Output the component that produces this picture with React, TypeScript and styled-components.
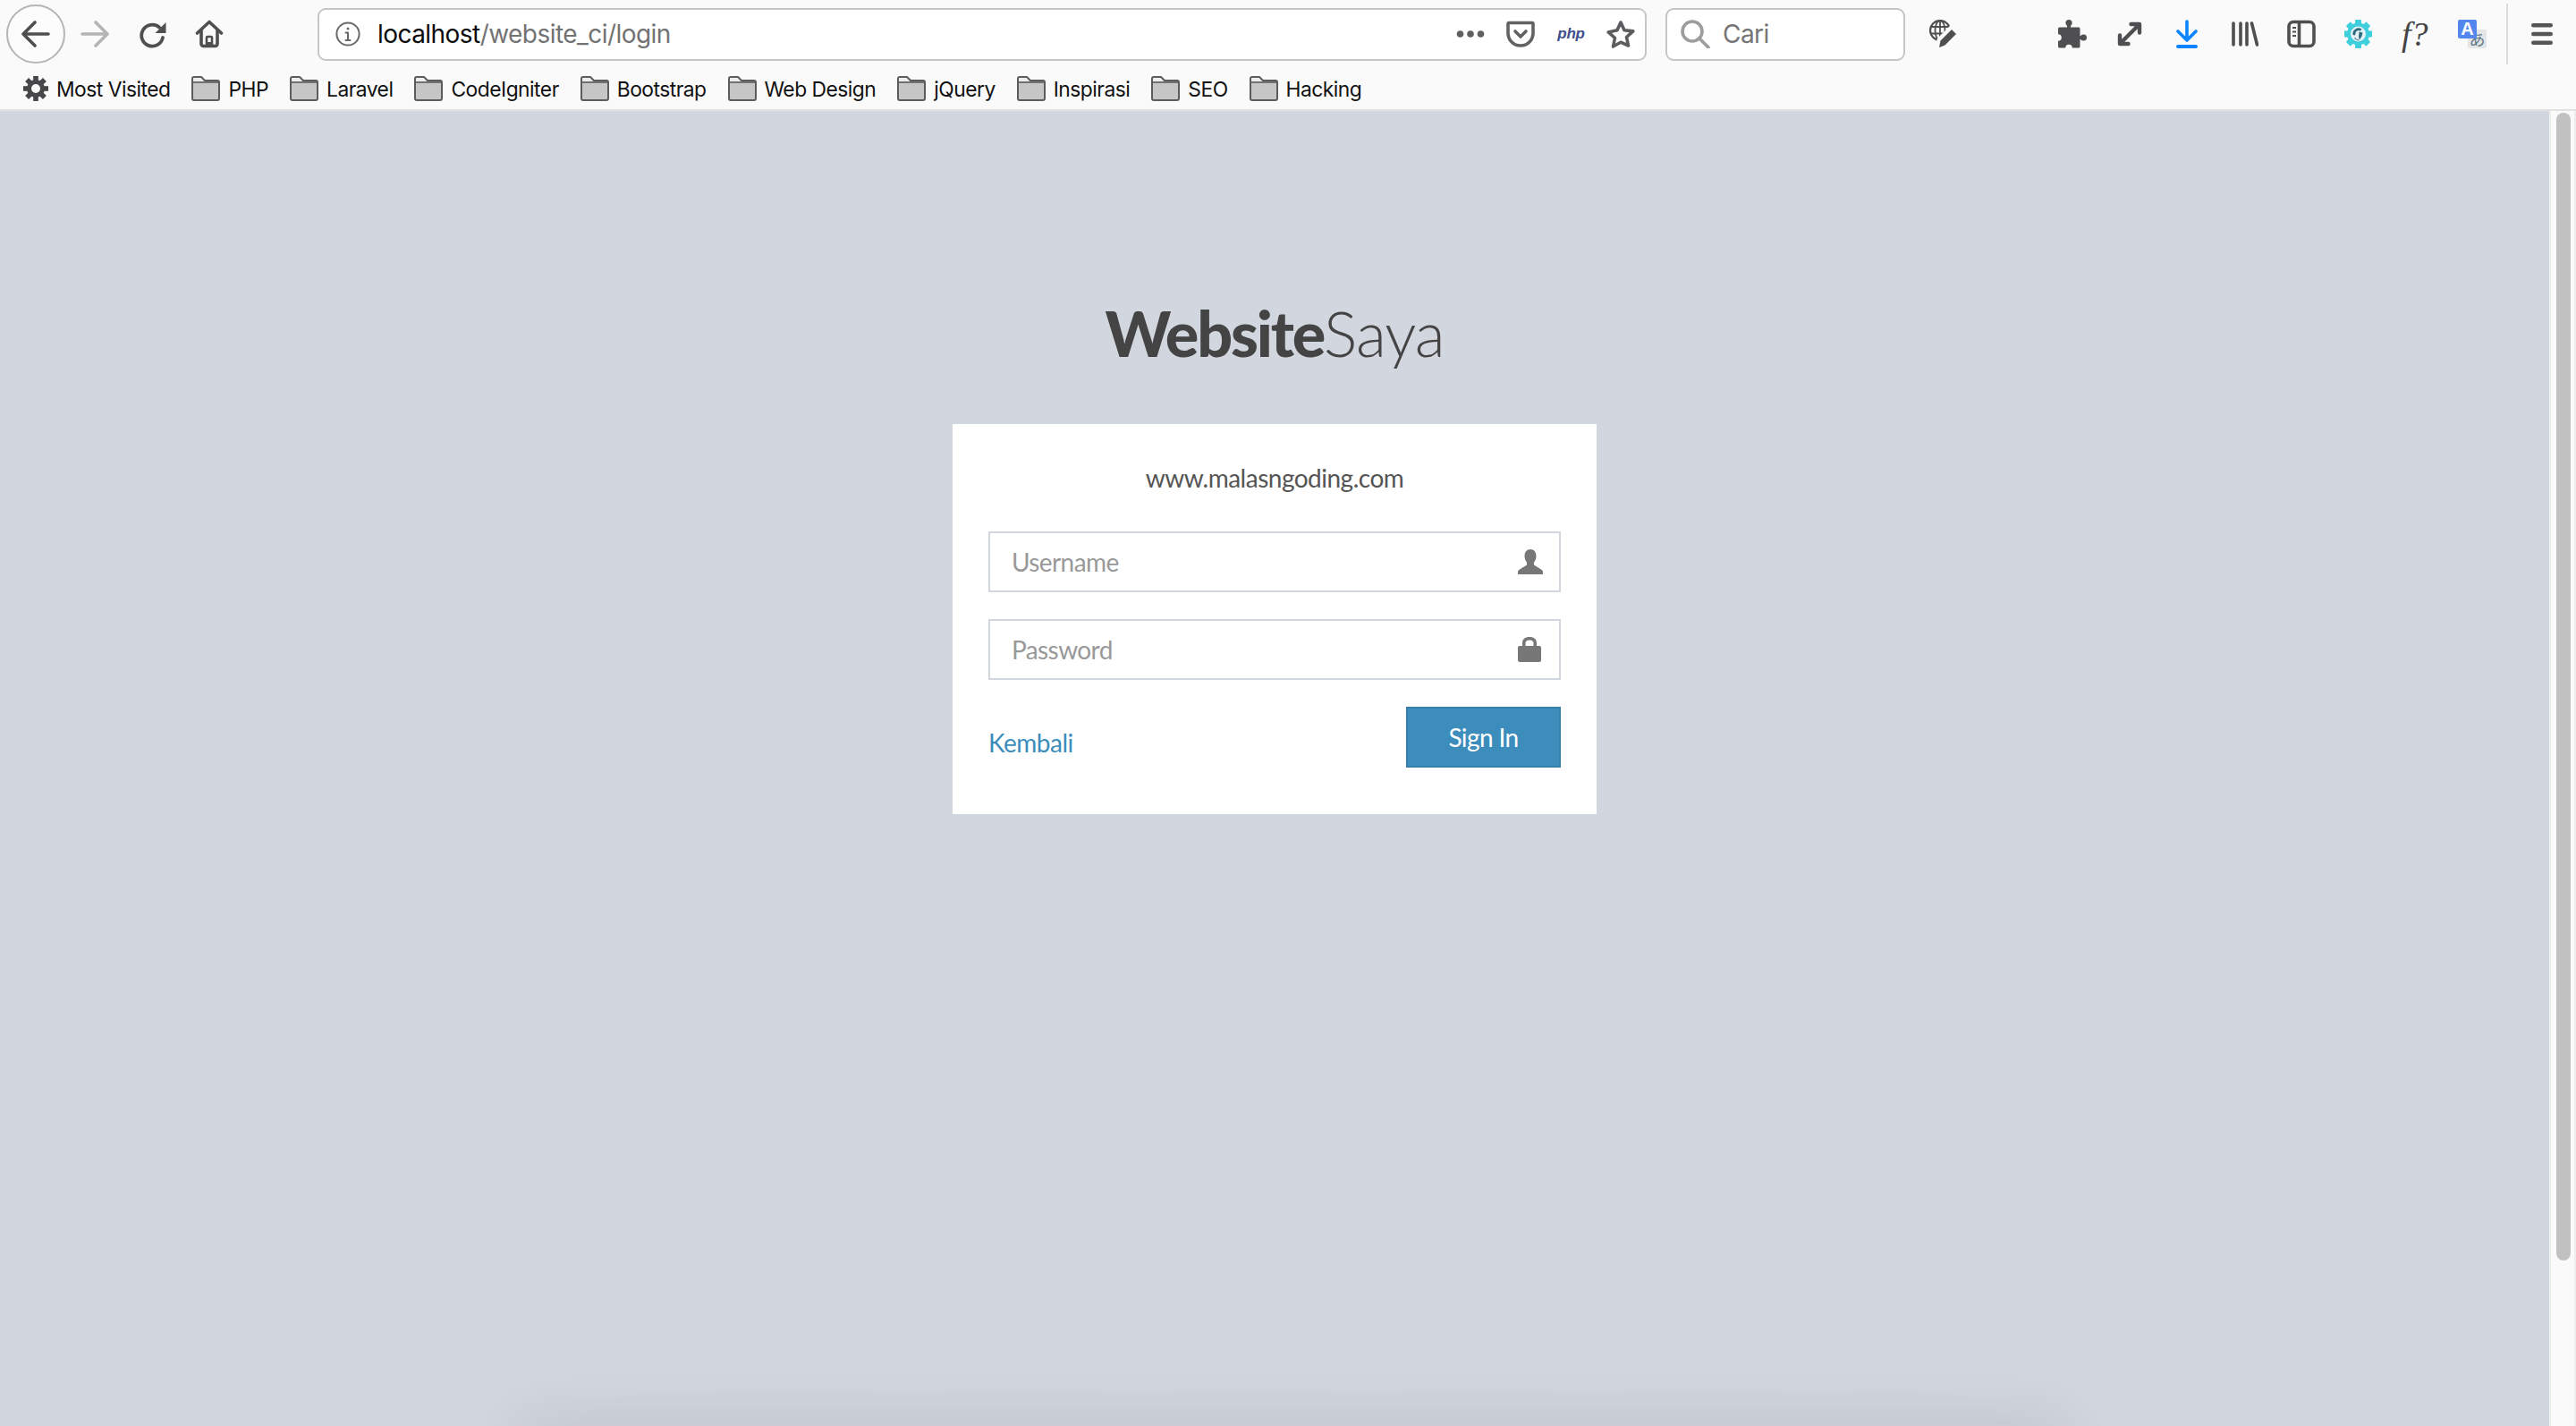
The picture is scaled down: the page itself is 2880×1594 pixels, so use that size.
import React from "react";
import styled, { createGlobalStyle } from "styled-components";

const Global = createGlobalStyle`
  html, body { margin: 0; padding: 0; height: 100%; overflow: hidden; background: #d2d6de; }
  #root { height: 100%; }
  * { box-sizing: border-box; }
`;

const Window = styled.div`
  width: 2880px;
  height: 1594px;
  display: flex;
  flex-direction: column;
  overflow: hidden;
  position: relative;
`;

const Chrome = styled.header`
  flex: none;
  height: 124px;
  background: #fafafa;
  border-bottom: 2px solid #e2e2e3;
  font-family: Inter, "Liberation Sans", sans-serif;
`;

const NavRow = styled.div`
  height: 76px;
  display: flex;
  align-items: center;
  padding-left: 7px;
`;

const Glyph = styled.svg<{ $w: number; $h?: number; $ml?: number }>`
  flex: none;
  display: block;
  width: ${(p) => p.$w}px;
  height: ${(p) => p.$h ?? 32}px;
  margin-left: ${(p) => p.$ml ?? 0}px;
`;

const BackCircle = styled.div`
  flex: none;
  width: 66px;
  height: 66px;
  border: 2px solid #b5b5b7;
  border-radius: 50%;
  background: #fcfcfc;
  display: flex;
  align-items: center;
  justify-content: center;
`;

const Field = styled.div<{ $w: number; $ml: number }>`
  flex: none;
  width: ${(p) => p.$w}px;
  height: 59px;
  margin-left: ${(p) => p.$ml}px;
  background: #fff;
  border: 2px solid #c6c6c7;
  border-radius: 9px;
  display: flex;
  align-items: center;
`;

const UrlText = styled.div`
  font-size: 28px;
  letter-spacing: -0.55px;
  color: #737373;
  margin-left: 19px;
  flex: 1;
  white-space: nowrap;
`;

const UrlHost = styled.span`
  color: #0c0c0d;
`;

const PhpBadge = styled.span`
  flex: none;
  width: 31px;
  margin-left: 25px;
  font-family: "Liberation Sans", sans-serif;
  font-size: 17px;
  font-weight: 700;
  font-style: italic;
  color: #414f8c;
  text-align: center;
  letter-spacing: -0.3px;
`;

const SearchHint = styled.span`
  font-size: 28px;
  letter-spacing: -0.55px;
  color: #757575;
  margin-left: 14px;
`;

const FontQuery = styled.span`
  flex: none;
  width: 32px;
  margin-left: 33px;
  font-family: "Liberation Serif", serif;
  font-style: italic;
  font-size: 38px;
  line-height: 32px;
  color: #444;
  white-space: nowrap;
`;

const TranslateBadge = styled.div`
  flex: none;
  width: 32px;
  height: 32px;
  margin-left: 31px;
  position: relative;
`;

const TranslateA = styled.span`
  position: absolute;
  left: 0;
  top: 0;
  width: 21px;
  height: 21px;
  border-radius: 2px;
  background: #5387ee;
  color: #fff;
  font-family: "Liberation Sans", sans-serif;
  font-weight: 700;
  font-size: 20px;
  line-height: 21px;
  text-align: center;
`;

const TranslateKana = styled.span`
  position: absolute;
  right: 0;
  bottom: 0;
  width: 21px;
  height: 21px;
  border-radius: 2px;
  background: #e4e5e6;
  color: #5f7888;
  font-family: "Noto Sans CJK JP", sans-serif;
  font-size: 18px;
  line-height: 21px;
  text-align: center;
`;

const Divider = styled.div`
  flex: none;
  width: 2px;
  height: 68px;
  margin-left: 22px;
  background: #dcdcdd;
`;

const BookmarkRow = styled.nav`
  height: 46px;
  display: flex;
  align-items: center;
  padding-left: 26px;
`;

const Bookmark = styled.div<{ $ml?: number }>`
  display: flex;
  align-items: center;
  gap: 9px;
  margin-left: ${(p) => p.$ml ?? 24}px;
  font-size: 22.8px;
  letter-spacing: -0.5px;
  color: #111;
  white-space: nowrap;
`;

const Viewport = styled.div`
  flex: 1;
  min-height: 0;
  display: flex;
`;

const Page = styled.main`
  flex: 1;
  min-width: 0;
  padding-top: 200px;
  background: #d2d6de;
  font-family: Lato, "Noto Sans", sans-serif;
  font-size: 28px;
  color: #444;
`;

const Logo = styled.h1`
  margin: 0 0 50px;
  height: 100px;
  font-size: 70px;
  line-height: 97px;
  font-weight: 300;
  text-align: center;
  color: #444;
  letter-spacing: -1px;
`;

const LogoStrong = styled.b`
  font-weight: 900;
  letter-spacing: -2.2px;
`;

const Card = styled.section`
  width: 720px;
  height: 436px;
  margin: 0 auto;
  padding: 40px;
  background: #fff;
`;

const Message = styled.p`
  margin: 0;
  height: 80px;
  line-height: 40px;
  text-align: center;
  color: #555;
  letter-spacing: -0.5px;
`;

const InputBox = styled.label`
  height: 68px;
  margin-bottom: 30px;
  border: 2px solid #d2d6de;
  display: flex;
  align-items: center;
  padding: 0 18px 0 24px;
`;

const TextInput = styled.input`
  flex: 1;
  min-width: 0;
  border: 0;
  outline: 0;
  padding: 0;
  background: transparent;
  font: inherit;
  letter-spacing: -0.6px;
  color: #555;
  &::placeholder {
    color: #999;
    opacity: 1;
  }
`;

const FormFooter = styled.div`
  display: flex;
  justify-content: space-between;
  align-items: flex-start;
`;

const BackLink = styled.a`
  margin-top: 20px;
  line-height: 40px;
  color: #3c8dbc;
  letter-spacing: -0.5px;
  text-decoration: none;
`;

const SignIn = styled.button`
  width: 173px;
  height: 68px;
  padding: 0;
  background: #3c8dbc;
  border: 2px solid #367fa9;
  color: #fff;
  font: inherit;
  letter-spacing: -0.6px;
`;

const ScrollTrack = styled.aside`
  flex: none;
  width: 30px;
  padding: 2px 4px 0 6px;
  background: #fafafa;
  border-left: 2px solid #eeeeee;
  border-right: 2px solid #eeeeee;
`;

const ScrollThumb = styled.div`
  width: 16px;
  height: 1283px;
  border-radius: 8px;
  background: #c1c1c1;
`;

const DockShadow = styled.div`
  position: absolute;
  left: 580px;
  width: 1730px;
  bottom: -40px;
  height: 40px;
  box-shadow: 0 0 70px 4px rgba(0, 0, 0, 0.1), 0 0 150px 0 rgba(0, 0, 0, 0.025);
`;

const ink = "#4f4f52";

const Back = () => (
  <Glyph $w={32} viewBox="0 0 32 32" fill="none" stroke={ink} strokeWidth={3.6} strokeLinecap="round" strokeLinejoin="round">
    <path d="M2 16h28M15 3 2 16l13 13" />
  </Glyph>
);

const Forward = () => (
  <Glyph $w={32} $ml={17} viewBox="0 0 32 32" fill="none" stroke="#b4b4b6" strokeWidth={3.6} strokeLinecap="round" strokeLinejoin="round">
    <path d="M2 16h28M17 3l13 13-13 13" />
  </Glyph>
);

const Reload = () => (
  <Glyph $w={30} $ml={34} viewBox="0 0 30 32" fill="none">
    <path d="M22 8.5A12 12 0 1 0 26 20" stroke={ink} strokeWidth={3.8} strokeLinecap="round" />
    <path d="M29.5 3v12H17.5z" fill={ink} />
  </Glyph>
);

const Home = () => (
  <Glyph $w={32} $ml={32} viewBox="0 0 32 32" fill="none" stroke={ink} strokeWidth={3.6} strokeLinecap="round" strokeLinejoin="round">
    <path d="M2.5 15 16 2.5 29.5 15" />
    <path d="M7 12v15a2.5 2.5 0 0 0 2.5 2.5h13A2.5 2.5 0 0 0 25 27V12" />
    <path d="M13 29v-9a1 1 0 0 1 1-1h4a1 1 0 0 1 1 1v9" strokeWidth={2.6} />
    <path d="M13 25h6v4h-6z" fill={ink} stroke="none" />
  </Glyph>
);

const Info = () => (
  <Glyph $w={28} $h={28} $ml={18} viewBox="0 0 28 28" fill="none" stroke="#69696c" strokeWidth={2}>
    <circle cx={14} cy={14} r={12.6} />
    <path d="M14 12.5V21M11.5 21h5M11.5 12.5H14" strokeLinecap="round" />
    <circle cx={14} cy={8} r={1.5} fill="#69696c" stroke="none" />
  </Glyph>
);

const Dots = () => (
  <Glyph $w={32} $h={10} viewBox="0 0 32 10" fill="#5f5f62">
    <circle cx={4.5} cy={5} r={3.8} />
    <circle cx={16} cy={5} r={3.8} />
    <circle cx={27.5} cy={5} r={3.8} />
  </Glyph>
);

const Pocket = () => (
  <Glyph $w={32} $ml={24} viewBox="0 0 32 32" fill="none" stroke="#626265" strokeWidth={3.6} strokeLinecap="round" strokeLinejoin="round">
    <path d="M3 3.5h26a1 1 0 0 1 1 1V15a14 14 0 0 1-28 0V4.500a1 1 0 0 1 1-1z" />
    <path d="M10 13l6 6 6-6" />
  </Glyph>
);

const Star = () => (
  <Glyph $w={32} $ml={24} viewBox="0 0 32 32" fill="none" stroke="#5c5c5f" strokeWidth={3.6} strokeLinejoin="round">
    <path d="M16 3l4 8.800 9.800 1.100-7.300 6.600 2 9.500L16 25.200 7.500 30l2-9.500-7.300-6.600L12 11.800z" />
  </Glyph>
);

const Magnifier = () => (
  <Glyph $w={33} $ml={15} viewBox="0 0 33 32" fill="none" stroke="#9d9d9f" strokeWidth={3.6} strokeLinecap="round">
    <circle cx={13} cy={13} r={11} />
    <path d="M21 21l10 10" />
  </Glyph>
);

const GlobeEdit = () => (
  <Glyph $w={32} $ml={27} viewBox="0 0 32 32" fill="none">
    <circle cx={12} cy={12} r={11} stroke={ink} strokeWidth={2.2} />
    <ellipse cx={12} cy={12} rx={5.500} ry={11} stroke={ink} strokeWidth={1.800} />
    <path d="M1 8h22M1 15.500h22M12 1v22" stroke={ink} strokeWidth={1.800} />
    <path d="M6 32l3-11L24 6l8 8-15 15z" fill="#fafafa" />
    <path d="M11 31l1.500-7.500L25 11l5 5-12.500 12.500z" fill={ink} />
  </Glyph>
);

const Puzzle = () => (
  <Glyph $w={32} $ml={112} viewBox="0 0 32 32" fill={ink}>
    <rect x={0} y={8.500} width={24.500} height={23} rx={1.500} />
    <rect x={10} y={3} width={4} height={7} />
    <circle cx={12} cy={3.600} r={3.600} />
    <rect x={23} y={18} width={5} height={4} />
    <circle cx={28.400} cy={20} r={3.600} />
    <circle cx={0} cy={20} r={3.800} fill="#fafafa" />
    <circle cx={12} cy={31.500} r={3.800} fill="#fafafa" />
  </Glyph>
);

const Expand = () => (
  <Glyph $w={28} $h={28} $ml={34} viewBox="0 0 28 28" fill="none" stroke={ink} strokeWidth={4.400} strokeLinecap="round" strokeLinejoin="round">
    <path d="M5 23 23 5M15.500 3H25v9.500M3 15.500V25h9.500" />
  </Glyph>
);

const Download = () => (
  <Glyph $w={24} $ml={38} viewBox="0 0 24 32" fill="none" stroke="#0a84ff" strokeWidth={3.6} strokeLinecap="round" strokeLinejoin="round">
    <path d="M12 2v21M2 13l10 10 10-10" />
    <path d="M2 30h20" strokeWidth={4} />
  </Glyph>
);

const Library = () => (
  <Glyph $w={30} $ml={38} viewBox="0 0 30 32" fill="none" stroke={ink} strokeWidth={3.6} strokeLinecap="round">
    <path d="M2 4v24M10 4v24M17 4v24M22.500 4l6 24" />
  </Glyph>
);

const Sidebar = () => (
  <Glyph $w={32} $ml={32} viewBox="0 0 32 32" fill="none" stroke={ink} strokeWidth={3.6} strokeLinejoin="round">
    <rect x={2} y={2.500} width={28} height={27} rx={5} />
    <path d="M13.500 2.500v27" />
    <path d="M6 9h4M6 13.500h4M6 18h4" strokeWidth={2} />
  </Glyph>
);

const toothAngles = [0, 45, 90, 135, 180, 225, 270, 315];

const Atom = () => (
  <Glyph $w={31} $ml={32} viewBox="0 0 31 32" fill="none">
    <g transform="translate(15.500 16)">
      {toothAngles.map((a) => (
        <rect key={a} x={-3.500} y={-16} width={7} height={7} rx={1} fill="#3fcfdc" transform={`rotate(${a})`} />
      ))}
      <circle r={12.500} fill="#3fcfdc" />
      <circle r={8.500} fill="#e6f2f5" />
      <path d="M-6 1a6.500 6.500 0 0 1 10-6.500l-1.500 2a4 4 0 0 0-5 1l-1 4zM1-2.500l4 1-1 4-2.500 4-1-3z" fill="#2f6b80" />
      <path d="M-4 4a6 6 0 0 0 5 3" stroke="#6c9cac" strokeWidth={1.500} />
    </g>
  </Glyph>
);

const Burger = () => (
  <Glyph $w={24} $h={24} $ml={26} viewBox="0 0 24 24" fill="#555558">
    <rect y={0} width={24} height={4.600} rx={2.300} />
    <rect y={9.700} width={24} height={4.600} rx={2.300} />
    <rect y={19.400} width={24} height={4.600} rx={2.300} />
  </Glyph>
);

const SmallGear = () => (
  <Glyph $w={28} $h={28} viewBox="0 0 28 28" fill="none">
    <g transform="translate(14 14)">
      {toothAngles.map((a) => (
        <rect key={a} x={-2.800} y={-14} width={5.600} height={6} fill="#47474a" transform={`rotate(${a})`} />
      ))}
      <circle r={7.500} stroke="#47474a" strokeWidth={5} />
    </g>
  </Glyph>
);

const Folder = () => (
  <Glyph $w={32} $h={28} viewBox="0 0 32 28" fill="none">
    <path d="M1 3a2 2 0 0 1 2-2h8l4 4h14a2 2 0 0 1 2 2v18a2 2 0 0 1-2 2H3a2 2 0 0 1-2-2z" fill="#c6c6c7" stroke="#5c5c5e" strokeWidth={2} />
    <path d="M2 3a1 1 0 0 1 1-1h7.500l3.500 4H2z" fill="#ededee" />
    <path d="M1 7h30" stroke="#5c5c5e" strokeWidth={1.600} />
  </Glyph>
);

const PersonIcon = () => (
  <Glyph $w={28} $h={28} viewBox="0 0 28 28" fill="#777">
    <path d="M14 0c4 0 6.500 3 6.500 7.500 0 3-1 5.500-2.500 7v3l8 5c1.500 1 2 2 2 3V28H0v-2.500c0-1 .5-2 2-3l8-5v-3c-1.500-1.500-2.500-4-2.500-7C7.500 3 10 0 14 0z" />
  </Glyph>
);

const LockIcon = () => (
  <Glyph $w={26} $h={28} viewBox="0 0 26 28" fill="#777">
    <path d="M13 0c5 0 8 2.500 8 7v3h3a2 2 0 0 1 2 2v14a2 2 0 0 1-2 2H2a2 2 0 0 1-2-2V12a2 2 0 0 1 2-2h3V7c0-4.500 3-7 8-7zm0 3.500c-3 0-4.500 1.300-4.500 3.500v3h9V7c0-2.200-1.500-3.500-4.500-3.500z" />
  </Glyph>
);

const LockSlot = styled.span`
  flex: none;
  width: 28px;
`;

const folders = [
  "PHP",
  "Laravel",
  "CodeIgniter",
  "Bootstrap",
  "Web Design",
  "jQuery",
  "Inspirasi",
  "SEO",
  "Hacking",
];

export default function App() {
  return (
    <Window>
      <Global />
      <Chrome>
        <NavRow>
          <BackCircle>
            <Back />
          </BackCircle>
          <Forward />
          <Reload />
          <Home />
          <Field $w={1486} $ml={105}>
            <Info />
            <UrlText>
              <UrlHost>localhost</UrlHost>/website_ci/login
            </UrlText>
            <Dots />
            <Pocket />
            <PhpBadge>php</PhpBadge>
            <Star />
            <Glyph $w={11} $h={2} />
          </Field>
          <Field $w={268} $ml={21}>
            <Magnifier />
            <SearchHint>Cari</SearchHint>
          </Field>
          <GlobeEdit />
          <Puzzle />
          <Expand />
          <Download />
          <Library />
          <Sidebar />
          <Atom />
          <FontQuery>f?</FontQuery>
          <TranslateBadge>
            <TranslateKana>あ</TranslateKana>
            <TranslateA>A</TranslateA>
          </TranslateBadge>
          <Divider />
          <Burger />
        </NavRow>
        <BookmarkRow>
          <Bookmark $ml={0}>
            <SmallGear />
            <span>Most Visited</span>
          </Bookmark>
          {folders.map((name) => (
            <Bookmark key={name}>
              <Folder />
              <span>{name}</span>
            </Bookmark>
          ))}
        </BookmarkRow>
      </Chrome>
      <Viewport>
        <Page>
          <Logo>
            <LogoStrong>Website</LogoStrong>Saya
          </Logo>
          <Card>
            <Message>www.malasngoding.com</Message>
            <InputBox>
              <TextInput placeholder="Username" />
              <PersonIcon />
            </InputBox>
            <InputBox>
              <TextInput placeholder="Password" />
              <LockSlot>
                <LockIcon />
              </LockSlot>
            </InputBox>
            <FormFooter>
              <BackLink href="#">Kembali</BackLink>
              <SignIn type="button">Sign In</SignIn>
            </FormFooter>
          </Card>
        </Page>
        <ScrollTrack>
          <ScrollThumb />
        </ScrollTrack>
      </Viewport>
      <DockShadow />
    </Window>
  );
}
